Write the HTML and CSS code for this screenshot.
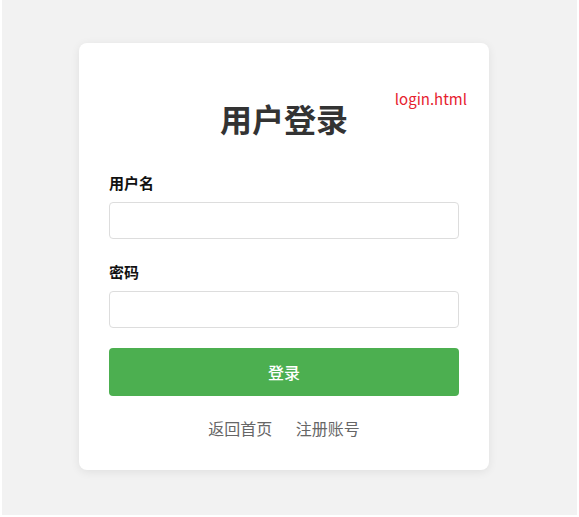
FILE: index.html
```html
<!DOCTYPE html>
<html lang="zh-CN">
<head>
  <meta charset="UTF-8" />
  <meta name="viewport" content="width=device-width, initial-scale=1.0"/>
  <title>用户登录</title>
  <link rel="stylesheet" href="styles.css">
</head>
<body>
  <div class="page">
    <div class="login-box">
      <span class="file-tag">login.html</span>
      <h2>用户登录</h2>
      <form>
        <div class="form-group">
          <label for="username">用户名</label>
          <input type="text" id="username" />
        </div>
        <div class="form-group">
          <label for="password">密码</label>
          <input type="password" id="password" />
        </div>
        <button type="button" class="btn-login">登录</button>
      </form>
      <div class="links">
        <a href="#">返回首页</a>
        <a href="#">注册账号</a>
      </div>
    </div>
  </div>
</body>
</html>
```

FILE: styles.css
```css
* {
  box-sizing: border-box;
  margin: 0;
  padding: 0;
}
html {
  background: #fff;
}
body {
  font-family: "Noto Sans CJK SC", "Noto Sans", sans-serif;
  color: #333;
}

.page {
  margin: 0 2px 2px;
  height: 515px;
  background: #f2f2f2;
  display: flex;
  justify-content: center;
  align-items: center;
  padding: 0 11px 2px 0;
}

.login-box {
  position: relative;
  width: 410px;
  background: #fff;
  border-radius: 8px;
  box-shadow: 0 2px 10px rgba(0, 0, 0, 0.08);
  padding: 30px;
}

.file-tag {
  position: absolute;
  top: 46px;
  right: 22px;
  font-size: 15px;
  line-height: 20px;
  color: #e6212e;
}

.login-box h2 {
  text-align: center;
  font-size: 32px;
  line-height: 42px;
  font-weight: bold;
  color: #333;
  margin: 24px 0 33px;
}

.form-group + .form-group {
  margin-top: 22px;
}

.form-group label {
  display: block;
  font-size: 15px;
  line-height: 22px;
  font-weight: bold;
  color: #111;
  margin-bottom: 8px;
}

.form-group input {
  display: block;
  width: 100%;
  height: 37px;
  padding: 0 10px;
  border: 1px solid #ddd;
  border-radius: 4px;
  font-size: 15px;
  outline: none;
}

.btn-login {
  display: block;
  width: 100%;
  height: 48px;
  margin-top: 20px;
  border: none;
  border-radius: 4px;
  background: #4caf50;
  color: #fff;
  font-family: inherit;
  font-size: 16px;
  font-weight: 500;
  cursor: pointer;
}

.links {
  margin-top: 21px;
  text-align: center;
  font-size: 16px;
  line-height: 22px;
  padding-bottom: 1px;
}

.links a {
  color: #666;
  text-decoration: none;
  margin: 0 10px;
}
```
